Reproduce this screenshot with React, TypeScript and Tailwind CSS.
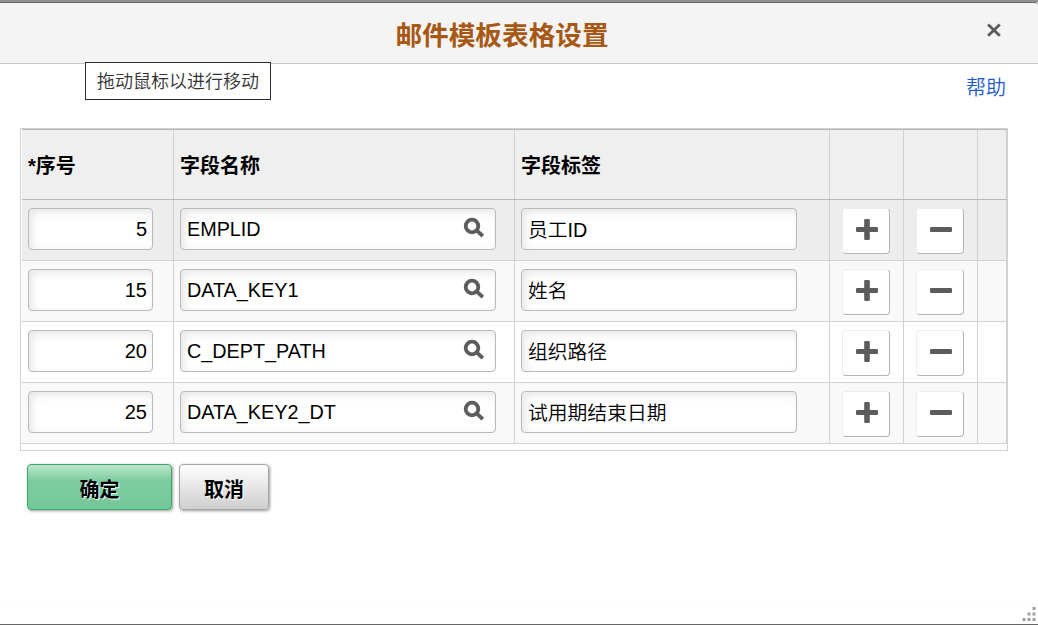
import React from "react";

type Row = { seq: string; field: string; label: string };

const rows: Row[] = [
  { seq: "5", field: "EMPLID", label: "员工ID" },
  { seq: "15", field: "DATA_KEY1", label: "姓名" },
  { seq: "20", field: "C_DEPT_PATH", label: "组织路径" },
  { seq: "25", field: "DATA_KEY2_DT", label: "试用期结束日期" },
];

const gridCols = "grid grid-cols-[152px_341px_315px_74px_74px_29px]";
const inputBox =
  "flex h-[42px] items-center rounded-[4px] border border-[#b9b9b9] bg-white pl-1.5 leading-none text-black shadow-[inset_3px_3px_8px_rgba(0,0,0,0.1)]";

function SearchIcon() {
  return (
    <svg width="22" height="22" viewBox="0 0 22 22" fill="none" stroke="#5c5c5c" className="mb-0.5">
      <circle cx="9" cy="9" r="6.3" strokeWidth="3.8" />
      <path d="M13.4 13.2L19.8 19.2" strokeWidth="3.8" />
    </svg>
  );
}

function SquareButton({ plus }: { plus?: boolean }) {
  return (
    <button className="flex h-[46px] w-12 items-center justify-center rounded-[4px] border border-t-[#ededed] border-r-[#b5b5b5] border-b-[#b5b5b5] border-l-[#ededed] bg-white">
      <svg width="24" height="22" viewBox="0 0 24 22" fill="#5c5c5c" className="translate-x-px -translate-y-px">
        <rect x="1" y="8" width="22" height="5" rx="1.3" />
        {plus && <rect x="9.2" y="0" width="5.6" height="21" rx="1.3" />}
      </svg>
    </button>
  );
}

export default function App() {
  return (
    <div className="flex h-[625px] w-[1038px] flex-col overflow-hidden border-b border-[#666] bg-white font-['Liberation_Sans','Noto_Sans_CJK_SC',sans-serif]">
      <div className="h-0.5 shrink-0 bg-[#919191]" />
      <header className="relative flex h-[62px] shrink-0 justify-center rounded-tr-[3px] border-t border-b border-t-[#666] border-b-[#c8c8c8] bg-[#f4f4f4] pr-[34px]">
        <h1 className="pt-[13px] text-[26.67px] leading-10 font-bold text-[#a75815]">邮件模板表格设置</h1>
        <button className="absolute top-5 right-9">
          <svg width="16" height="16" viewBox="0 0 16 16" stroke="#5c5c5c" strokeWidth="2.8">
            <path d="M2.1 1.4L13.8 12.7M13.8 1.4L2.1 12.7" />
          </svg>
        </button>
        <div className="absolute top-[59px] left-[85px] z-10 flex h-[38px] w-[186px] items-center justify-center border border-[#2b2b2b] bg-white pt-0.5 text-lg leading-none font-[350] text-[#333]">
          拖动鼠标以进行移动
        </div>
      </header>

      <div className="flex h-16 shrink-0 justify-end pt-[9px] pr-8">
        <a className="text-xl leading-[30px] font-[350] text-[#1f5bcb]">帮助</a>
      </div>

      <section className="ml-5 h-[323px] w-[988px] shrink-0 border border-[#d1d1d1] pl-px">
        <div className={`${gridCols} h-[71px] border-t border-b border-[#b8b8b8] bg-[#efefef]`}>
          {["*序号", "字段名称", "字段标签", "", "", ""].map((title, i) => (
            <div key={i} className="flex items-center border-r border-[#d1d1d1] pt-0.5 pl-1.5 text-xl leading-none font-bold text-black">
              {title}
            </div>
          ))}
        </div>
        {rows.map((row, i) => (
          <div
            key={row.seq}
            className={`${gridCols} h-[61px] border-b border-[#d1d1d1] *:border-r *:border-[#d1d1d1] *:pt-2 ${
              i === 0 ? "bg-[#ededed]" : i === 2 ? "bg-white" : "bg-[#f9f9f9]"
            }`}
          >
            <div className="pl-1.5">
              <div className={`${inputBox} w-[125px] justify-end pr-[5px] text-xl`}>{row.seq}</div>
            </div>
            <div className="pl-1.5">
              <div className={`${inputBox} w-[316px] justify-between pr-2.5 text-[19.8px]`}>
                <span className="pt-px">{row.field}</span>
                <SearchIcon />
              </div>
            </div>
            <div className="pl-1.5">
              <div className={`${inputBox} w-[276px] pt-1 text-[19.8px] font-[350]`}>{row.label}</div>
            </div>
            <div className="pl-3">
              <SquareButton plus />
            </div>
            <div className="pl-3">
              <SquareButton />
            </div>
            <div />
          </div>
        ))}
      </section>

      <div className="mt-[13px] ml-[27px] flex gap-[7px] text-xl font-bold text-black">
        <button className="h-[46px] w-[145px] rounded-[4px] border border-[#3aa66c] bg-linear-to-b from-[#bce6ce] via-[#7dcd9f] via-35% to-[#74c798] pt-1.5 shadow-[1px_1px_3px_rgba(0,0,0,0.4)] text-shadow-[1px_1px_1px_#fff]">
          确定
        </button>
        <button className="h-[46px] w-[90px] rounded-[4px] border border-[#a6a6a6] bg-linear-to-b from-white to-[#cecece] pt-1.5 shadow-[1px_1px_3px_rgba(0,0,0,0.4)] text-shadow-[1px_1px_1px_#fff]">
          取消
        </button>
      </div>

      <footer className="mt-auto flex h-[21px] shrink-0 items-end justify-end border-t border-[#fbfbfb] pr-0.5 pb-[3px]">
        <svg width="14" height="14" viewBox="0 0 14 14" fill="#a0a0a0">
          <path d="M10.5 0h3v3h-3zM5.5 5.5h3v3h-3zM10.5 5.5h3v3h-3zM0.5 11h3v3h-3zM5.5 11h3v3h-3zM10.5 11h3v3h-3z" />
        </svg>
      </footer>
    </div>
  );
}
